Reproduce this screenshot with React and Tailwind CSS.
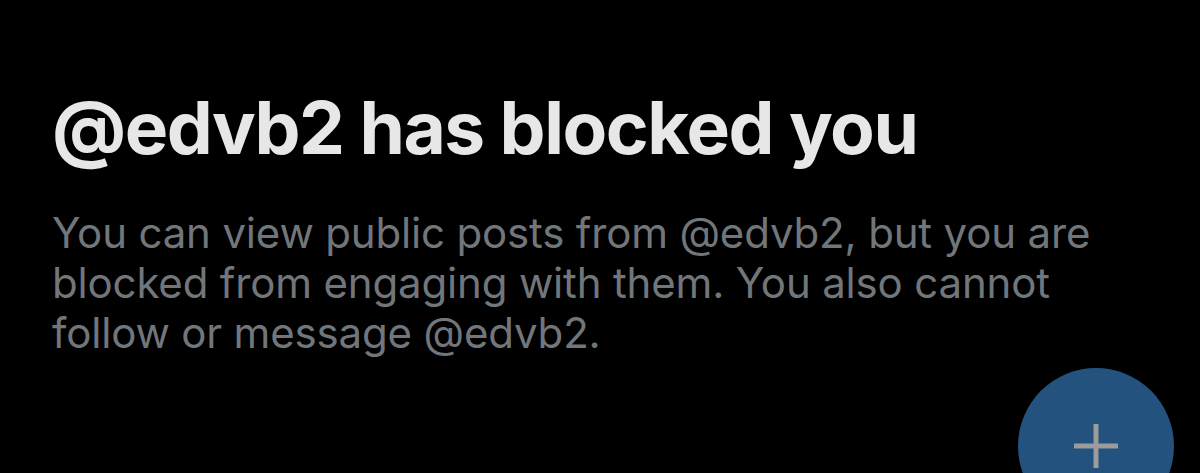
export default function App() {
	return (
		<div className="relative h-[473px] w-[1200px] overflow-hidden bg-black font-['Inter',sans-serif]">
			{/* Blocked notice */}
			<div className="flex flex-col pl-[52px] pr-[90px] pt-[84px]">
				<h1 className="text-[73px] font-bold leading-[88px] tracking-[-0.02em] text-[#e7e7e7]">
					@edvb2 has blocked you
				</h1>
				<p className="mt-[36px] text-[42px] leading-[50px] tracking-[-0.004em] text-[#71767b]">
					You can view public posts from @edvb2, but you are blocked from engaging with them. You also cannot follow or message @edvb2.
				</p>
			</div>
			{/* Floating compose button */}
			<div className="absolute left-[1018px] top-[368px] flex h-[156px] w-[156px] items-center justify-center rounded-full bg-[#23527e]">
				<svg width="48" height="48" viewBox="0 0 48 48" className="text-[#9c9c9c]">
					<path d="M24 2v44M2 24h44" stroke="currentColor" strokeWidth="5" />
				</svg>
			</div>
		</div>
	);
}
